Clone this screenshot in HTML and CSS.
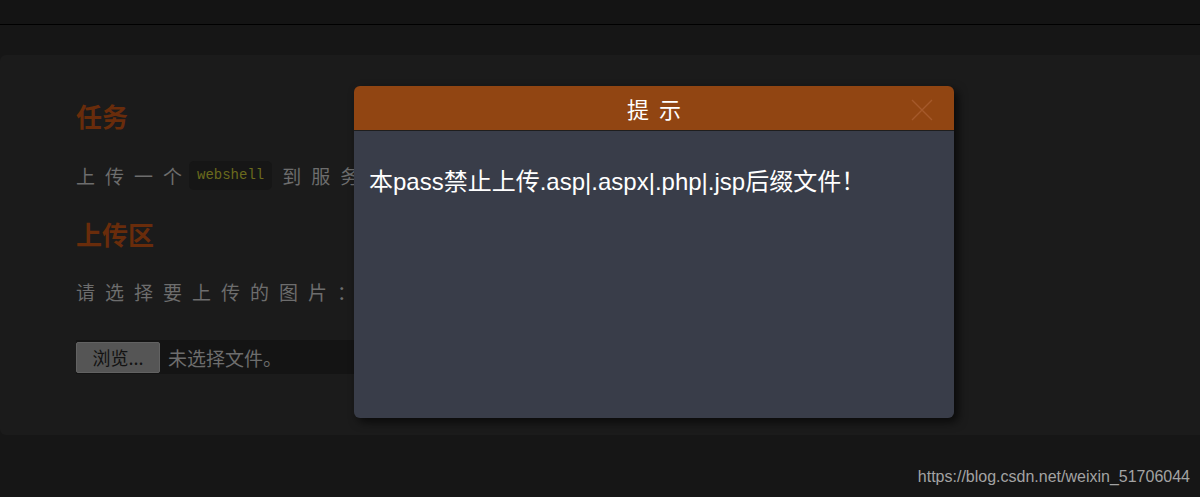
FILE: index.html
```html
<!DOCTYPE html>
<html lang="zh-CN">
<head>
  <meta charset="UTF-8">
  <meta name="viewport" content="width=device-width, initial-scale=1.0">
  <title>upload-labs</title>
  <link rel="stylesheet" href="styles.css">
</head>
<body>
  <div class="topbar"></div>

  <div class="card">
    <h2 class="section-title">任务</h2>
    <p class="task-text">上传一个<code class="code">webshell</code>到服务器。</p>

    <h2 class="section-title second">上传区</h2>
    <p class="task-text">请选择要上传的图片：</p>

    <div class="file-row">
      <span class="file-button">浏览...</span>
      <span class="file-name">未选择文件。</span>
    </div>
  </div>

  <div class="watermark">https://blog.csdn.net/weixin_51706044</div>

  <div class="dialog">
    <div class="dialog-header">
      <span class="dialog-title">提示</span>
      <span class="dialog-close">
        <svg width="22" height="22" viewBox="0 0 22 22">
          <path d="M1 1 L21 21 M21 1 L1 21" stroke="#a5592b" stroke-width="1.4" fill="none"/>
        </svg>
      </span>
    </div>
    <div class="dialog-body">本pass禁止上传.asp|.aspx|.php|.jsp后缀文件！</div>
  </div>
</body>
</html>
```

FILE: styles.css
```css
:root {
  --page-bg: #161616;
  --card-bg: #1b1b1b;
  --heading-color: #692c0b;
  --text-color: #6d6d6d;
  --dialog-head: #914512;
  --dialog-body: #393d49;
}

body {
  margin: 0;
  background-color: var(--page-bg);
  font-family: 'Liberation Sans', 'Noto Sans CJK SC', sans-serif;
  color: var(--text-color);
  overflow: hidden;
  height: 497px;
  position: relative;
}

.topbar {
  height: 24px;
  background-color: #141414;
  border-bottom: 1px solid #000;
}

.card {
  margin: 30px -20px 0 0;
  padding: 46px 0 61px 76px;
  background-color: var(--card-bg);
  border-radius: 6px;
}

.section-title {
  margin: 0;
  font-size: 26px;
  line-height: 30px;
  font-weight: bold;
  color: var(--heading-color);
  font-family: 'Noto Sans CJK SC', sans-serif;
}

.section-title.second {
  margin-top: 28px;
}

.task-text {
  margin: 30px 0 0;
  font-size: 19px;
  line-height: 30px;
  letter-spacing: 10px;
  font-family: 'Noto Sans CJK SC', sans-serif;
}

.section-title.second + .task-text {
  margin-top: 28px;
}

.code {
  display: inline-block;
  margin-left: -3px;
  margin-right: 10px;
  padding: 0 8px;
  height: 29px;
  line-height: 29px;
  vertical-align: top;
  font-family: 'Liberation Mono', monospace;
  font-size: 14px;
  letter-spacing: 0;
  color: #6b6a1d;
  background-color: #161616;
  border-radius: 5px;
}

.file-row {
  display: flex;
  align-items: center;
  margin-top: 33px;
  width: 300px;
  height: 34px;
  background-color: #141414;
}

.file-button {
  box-sizing: border-box;
  width: 84px;
  height: 31px;
  line-height: 29px;
  text-align: center;
  font-size: 18px;
  color: #121212;
  background-color: #555;
  border: 1px solid #626262;
  border-radius: 2px;
  font-family: 'Noto Sans CJK SC', sans-serif;
}

.file-name {
  margin-left: 8px;
  font-size: 19px;
  color: var(--text-color);
  font-family: 'Noto Sans CJK SC', sans-serif;
}

.watermark {
  position: absolute;
  right: 10px;
  top: 468px;
  font-size: 16px;
  color: #a3a3a3;
}

.dialog {
  position: absolute;
  left: 354px;
  top: 86px;
  width: 600px;
  height: 332px;
  display: flex;
  flex-direction: column;
  border-radius: 6px;
  overflow: hidden;
  box-shadow: 4px 4px 10px rgba(0, 0, 0, 0.65);
}

.dialog-header {
  position: relative;
  height: 44px;
  display: flex;
  align-items: center;
  justify-content: center;
  background-color: var(--dialog-head);
  border-bottom: 1px solid #1e1e1e;
}

.dialog-title {
  font-family: 'Noto Sans CJK SC', sans-serif;
  font-size: 22px;
  letter-spacing: 10px;
  padding-left: 10px;
  color: #fff;
}

.dialog-close {
  position: absolute;
  right: 21px;
  top: 13px;
  line-height: 0;
}

.dialog-body {
  flex: 1;
  padding: 38px 15px 0;
  background-color: var(--dialog-body);
  color: #fff;
  font-size: 24px;
  line-height: 26px;
}
```
